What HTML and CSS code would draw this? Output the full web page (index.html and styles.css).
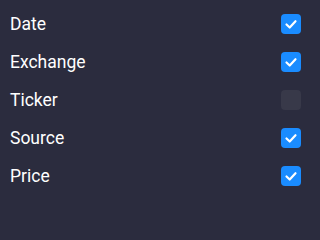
FILE: index.html
```html
<!DOCTYPE html>
<html>
<head>
<meta charset="utf-8">
<link rel="stylesheet" href="styles.css">
</head>
<body>
<div class="list">
  <div class="row"><span class="label">Date</span><span class="box on"><svg viewBox="0 0 20 20"><path d="M5.5 10.5 L8.7 13.5 L14.5 7.2"/></svg></span></div>
  <div class="row"><span class="label">Exchange</span><span class="box on"><svg viewBox="0 0 20 20"><path d="M5.5 10.5 L8.7 13.5 L14.5 7.2"/></svg></span></div>
  <div class="row"><span class="label">Ticker</span><span class="box"></span></div>
  <div class="row"><span class="label">Source</span><span class="box on"><svg viewBox="0 0 20 20"><path d="M5.5 10.5 L8.7 13.5 L14.5 7.2"/></svg></span></div>
  <div class="row"><span class="label">Price</span><span class="box on"><svg viewBox="0 0 20 20"><path d="M5.5 10.5 L8.7 13.5 L14.5 7.2"/></svg></span></div>
</div>
</body>
</html>
```
FILE: styles.css
```css
html, body {
  margin: 0;
  padding: 0;
  background: #2b2c3e;
  height: 100%;
}
.list {
  display: flex;
  flex-direction: column;
  padding: 5px 19px 0 10px;
  font-family: Roboto, "Liberation Sans", sans-serif;
}
.row {
  height: 38px;
  display: flex;
  align-items: center;
  justify-content: space-between;
}
.label {
  color: #ffffff;
  font-size: 17.5px;
  line-height: 20px;
}
.box {
  width: 20px;
  height: 20px;
  border-radius: 4px;
  background: #383949;
  display: flex;
}
.box.on {
  background: #1a8cff;
}
.box svg {
  width: 20px;
  height: 20px;
}
.box path {
  fill: none;
  stroke: #ffffff;
  stroke-width: 2.2;
  stroke-linecap: round;
  stroke-linejoin: round;
}
```
